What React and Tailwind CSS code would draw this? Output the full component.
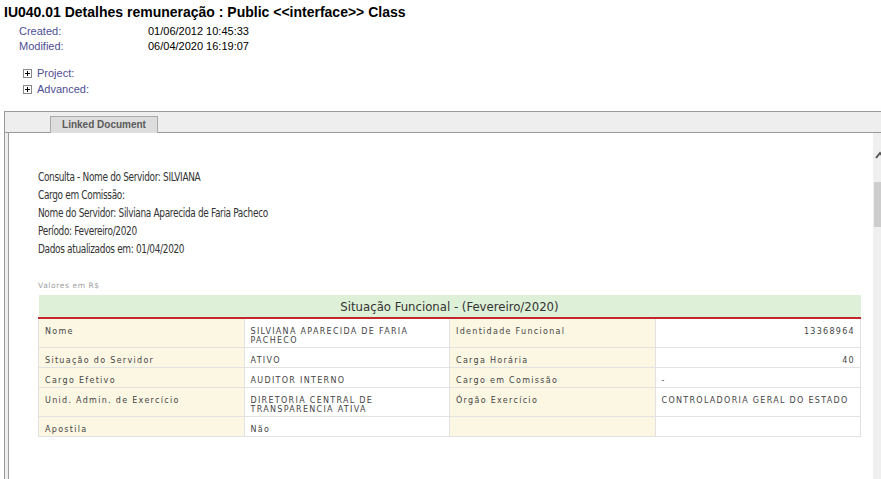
import React from 'react';

const rows = [
  ['Nome', 'SILVIANA APARECIDA DE FARIA PACHECO', 'Identidade Funcional', '13368964'],
  ['Situação do Servidor', 'ATIVO', 'Carga Horária', '40'],
  ['Cargo Efetivo', 'AUDITOR INTERNO', 'Cargo em Comissão', '-'],
  ['Unid. Admin. de Exercício', 'DIRETORIA CENTRAL DE TRANSPARENCIA ATIVA', 'Órgão Exercício', 'CONTROLADORIA GERAL DO ESTADO'],
  ['Apostila', 'Não', '', ''],
];

const narrow = "font-['DejaVu_Sans_Condensed','Liberation_Sans',sans-serif]";

function PlusBox() {
  return (
    <span className="inline-flex w-[9px] h-[9px] border border-[#888] bg-white items-center justify-center mr-[5px]">
      <svg width="5" height="5" viewBox="0 0 5 5">
        <path d="M0 2.5H5M2.5 0V5" stroke="#000" strokeWidth="1" />
      </svg>
    </span>
  );
}

export default function App() {
  return (
    <div className="w-[881px] h-[479px] overflow-hidden bg-white text-black font-['Liberation_Sans',Arial,sans-serif]">
      <h1 className="pl-[4px] pt-[4px] text-[14px] font-bold leading-[17px]">
        IU040.01 Detalhes remuneração : Public &lt;&lt;interface&gt;&gt; Class
      </h1>

      <div className="mt-[3px] pl-[19px] text-[11px] leading-[15px]">
        <div className="grid grid-cols-[129px_1fr]">
          <span className="text-[#4e4e94]">Created:</span>
          <span>01/06/2012 10:45:33</span>
          <span className="text-[#4e4e94]">Modified:</span>
          <span>06/04/2020 16:19:07</span>
        </div>
      </div>

      <div className="mt-[11px] pl-[23px] text-[11px] leading-[16px] text-[#4e4e94]">
        <div className="flex items-center"><PlusBox />Project:</div>
        <div className="flex items-center"><PlusBox />Advanced:</div>
      </div>

      <div className="mt-[14px] ml-[4px] border-l border-t border-[#9a9a9a] bg-[#eeeeee]">
        <div className="h-[21px] border-b border-[#9a9a9a] flex items-end">
          <div className="ml-[45px] w-[108px] h-[17px] -mb-px border border-b-0 border-[#aaaaaa] bg-[#dddddd] text-[10px] leading-[15px] font-bold text-[#5a5a5a] text-center">
            Linked Document
          </div>
        </div>
        <div className="pl-[3px]">
          <div className="border-l border-[#9a9a9a] bg-white flex h-[360px]">
            <div className="flex-1 pl-[29px] pr-[12px] pt-[35px]">
              <div className={`${narrow} text-[12px] leading-[18px] text-[#333333] tracking-[-0.4px] origin-left scale-x-[0.83]`}>
                <p>Consulta - Nome do Servidor: SILVIANA</p>
                <p>Cargo em Comissão:</p>
                <p>Nome do Servidor: Silviana Aparecida de Faria Pacheco</p>
                <p>Período: Fevereiro/2020</p>
                <p>Dados atualizados em: 01/04/2020</p>
              </div>

              <p className="mt-[23px] font-['DejaVu_Sans',Verdana,sans-serif] text-[7.5px] leading-[10px] tracking-[0.6px] text-[#a0a0a0]">
                Valores em R$
              </p>

              <table className="mt-[4px] w-[823px] table-fixed border-collapse font-['DejaVu_Sans',Verdana,sans-serif] text-[8px] leading-[9px] tracking-[1.3px] text-[#444444]">
                <thead>
                  <tr>
                    <th colSpan={4} className={`${narrow} h-[23px] bg-[#dff0d8] border-b-2 border-[#c1272d] text-[13px] font-normal tracking-normal text-[#333333] text-center`}>
                      Situação Funcional - (Fevereiro/2020)
                    </th>
                  </tr>
                </thead>
                <tbody>
                  {rows.map((r, i) => (
                    <tr key={i}>
                      <td className="border border-[#e2e2e2] bg-[#fcf7e3] pl-[6px] pr-[6px] pt-[8px] pb-[2px] align-top">{r[0]}</td>
                      <td className="border border-[#e2e2e2] bg-white pl-[6px] pr-[20px] pt-[8px] pb-[2px] align-top">{r[1]}</td>
                      <td className="border border-[#e2e2e2] bg-[#fcf7e3] pl-[6px] pr-[6px] pt-[8px] pb-[2px] align-top">{r[2]}</td>
                      <td className={`border border-[#e2e2e2] bg-white pl-[6px] pr-[5px] pt-[8px] pb-[2px] align-top ${i < 2 ? 'text-right' : ''}`}>{r[3]}</td>
                    </tr>
                  ))}
                </tbody>
              </table>
            </div>
            <div className="w-[8px] bg-[#efefef] relative overflow-hidden">
              <svg className="absolute left-[2px] top-[18px]" width="10" height="8" viewBox="0 0 10 8">
                <path d="M1 7L5 2L9 7" fill="none" stroke="#555" strokeWidth="2" />
              </svg>
              <div className="absolute left-[1px] right-0 top-[49px] h-[45px] bg-[#cdcdcd]" />
            </div>
          </div>
        </div>
      </div>
    </div>
  );
}
